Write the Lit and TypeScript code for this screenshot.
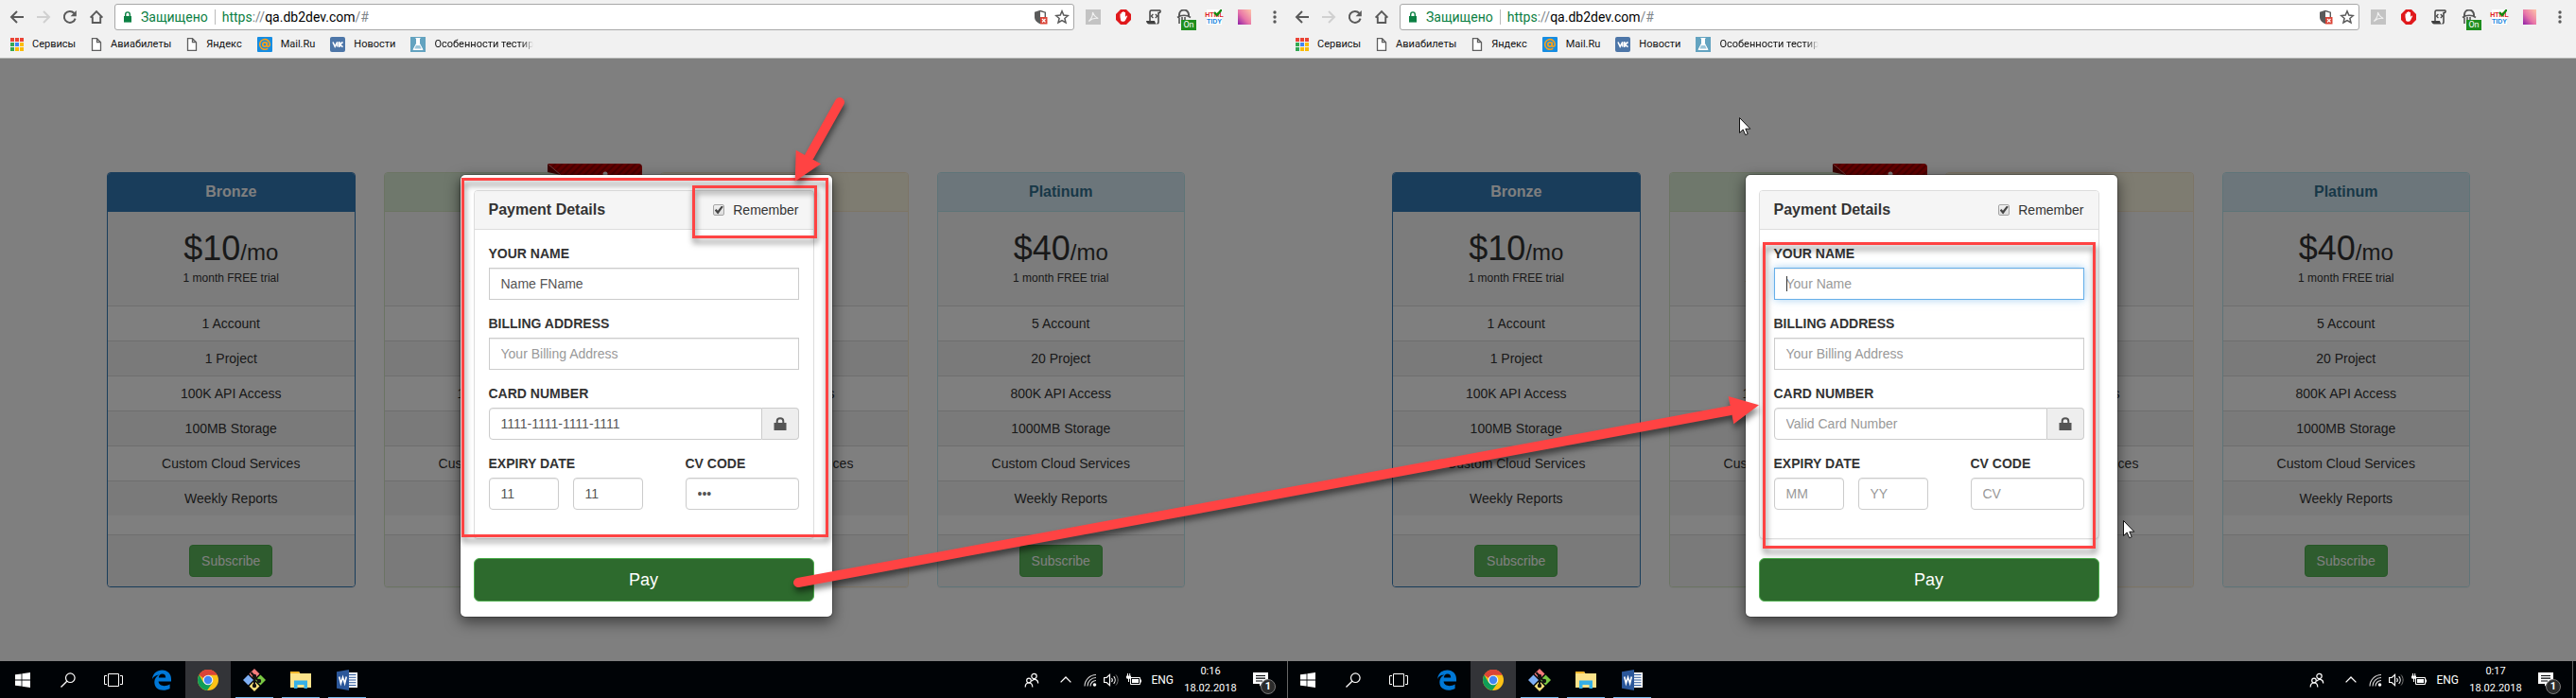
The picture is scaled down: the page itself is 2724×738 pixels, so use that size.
import { LitElement, html, svg, css, nothing } from "lit";
import { customElement, property } from "lit/decorators.js";
import { classMap } from "lit/directives/class-map.js";

const base = css`
  *, *::before, *::after { box-sizing: border-box; }
  button { font: inherit; color: inherit; border: 0; padding: 0; background: none; }
  a { color: inherit; text-decoration: none; }
  svg { display: block; }
`;

const ico = (size: number, body: unknown, box = 16) =>
  html`<svg width=${size} height=${size} viewBox="0 0 ${box} ${box}" aria-hidden="true">${body}</svg>`;

const icons = {
  back: ico(16, svg`<path d="M15 8H2.5M8 2 2 8l6 6" fill="none" stroke="#5a5a5a" stroke-width="2"/>`),
  forward: ico(16, svg`<path d="M1 8h12.5M8 2l6 6-6 6" fill="none" stroke="#d0d0d0" stroke-width="2"/>`),
  reload: ico(16, svg`<path d="M13.6 9.6A6 6 0 1 1 12.4 4" fill="none" stroke="#5a5a5a" stroke-width="2"/><path d="M14.8 1v6.2H8.6z" fill="#5a5a5a"/>`),
  home: ico(16, svg`<path d="M1.6 8.6 8 2l6.4 6.6M3.8 7.4V14h8.4V7.4" fill="none" stroke="#5a5a5a" stroke-width="1.9"/>`),
  lock: ico(12, svg`<path d="M2 5h8v6.6H2z" fill="#0b8043"/><path d="M3.7 5.4V3.2a2.3 2.3 0 0 1 4.6 0v2.2" fill="none" stroke="#0b8043" stroke-width="1.4"/>`, 12),
  shield: ico(16, svg`<path d="M8 .8 2 2.8V8c0 3.400 2.600 6 6 7.200z" fill="#5a5a5a"/><path d="M8 1.500 13.300 3.200V8c0 2.800-2.200 5-5.300 6.300" fill="none" stroke="#5a5a5a" stroke-width="1.400"/><path d="M8 8h7.500v7.500H8z" fill="#db4437"/><path d="m10 10 3.500 3.500m0-3.500L10 13.500" stroke="#fff" stroke-width="1.200"/>`),
  star: ico(16, svg`<path d="m8 1.800 1.800 4.300 4.600.4-3.500 3 1.100 4.500L8 11.600 4 14l1.100-4.500-3.500-3 4.600-.4z" fill="none" stroke="#5a5a5a" stroke-width="1.500"/>`),
  acrobat: ico(16, svg`<path d="M0 0h16v16H0z" fill="#c3c3c3"/><path d="M7.500 3c1.200 3 2 5 5.800 6.500-4-.8-7 .3-10 3C5.500 10.500 7.600 7 7.500 3z" fill="none" stroke="#f1f1f1" stroke-width="1.100"/>`),
  adblock: ico(16, svg`<path d="M5 0h6l5 5v6l-5 5H5l-5-5V5z" fill="#e0191c"/><path d="M4.500 8V4.500h1.300V7V3h1.400v3.500V2.200h1.400v4.300V3H10v5l1.200-1.500 1 .6L10 11.500c-.6 1.500-4 1.800-4.800.2z" fill="#fff"/>`),
  script: ico(16, svg`<path d="M4 12V2.500C4 1.500 4.500 1 5.500 1h9c.8 0 .8 2.500-.5 2.500H13V13c0 1-.5 2-1.500 2" fill="none" stroke="#404040" stroke-width="1.500"/><path d="M0 12h9c.2 1.400.8 2.300 2 3.500H3C1.500 15.500.3 14 0 12z" fill="#404040"/><path d="m7.400 5-2 2 2 2m2.400-4 2 2-2 2" fill="none" stroke="#404040" stroke-width="1.200"/>`),
  incognito: ico(16, svg`<path d="M3 7V5.500a5 5 0 0 1 10 0V7" fill="none" stroke="#555" stroke-width="2"/><path d="M1 8.500c4-3 10-3 14 0M3 8.500V15M6 8v7M9 8v7" fill="none" stroke="#555" stroke-width="1.600"/>`),
  check: ico(16, svg`<path d="m8 3 3 3 5-6" fill="none" stroke="#118a11" stroke-width="2.400"/>`),
  gem: html`<svg width="14" height="16" viewBox="0 0 14 16"><defs><linearGradient id="g" x1="0" y1="1" x2="1" y2="0"><stop offset="0" stop-color="#8e1fa8"/><stop offset=".45" stop-color="#e875a8"/><stop offset="1" stop-color="#ffc6a8"/></linearGradient></defs><rect width="14" height="16" fill="url(#g)"/></svg>`,
  menu: html`<svg width="4" height="14" viewBox="0 0 4 14"><g fill="#5a5a5a"><circle cx="2" cy="2" r="1.700"/><circle cx="2" cy="7" r="1.700"/><circle cx="2" cy="12" r="1.700"/></g></svg>`,
  apps: ico(14, svg`${["#ea4335", "#ea4335", "#ea4335", "#34a853", "#4285f4", "#fbbc05", "#34a853", "#fbbc05", "#fbbc05"].map(
    (c, i) => svg`<rect x=${(i % 3) * 5} y=${Math.floor(i / 3) * 5} width="4" height="4" fill=${c}/>`)}`, 14),
  doc: html`<svg width="12" height="14" viewBox="0 0 12 14"><path d="M1.500.7h5l4 4v8.600h-9zM6.500.7v4h4" fill="#fff" stroke="#5f5f5f" stroke-width="1.300"/></svg>`,
  mail: ico(16, svg`<rect width="16" height="16" rx="1" fill="#168de2"/><circle cx="8" cy="8" r="2.200" fill="none" stroke="#f9a01b" stroke-width="1.700"/><path d="M10.300 5.500V9c0 2 3 1.500 3-1a5.300 5.300 0 1 0-2 4.100" fill="none" stroke="#f9a01b" stroke-width="1.600"/>`),
  vk: ico(16, svg`<rect width="16" height="16" rx="2" fill="#4d76a8"/><path d="m3 5.500 2.200 4.800L7.800 5.500v5M13.500 5.500 10.300 8l3.200 2.700M9.800 5v6" fill="none" stroke="#fff" stroke-width="1.600"/>`),
  flask: ico(16, svg`<rect width="16" height="16" fill="#63a3c0"/><path d="M5.500 1.500h5M6.500 2v5L3 13.500h10L9.500 7V2z" fill="#fff" stroke="#fff"/><path d="M6 9h4l1.700 3.500H4.300z" fill="#9cc6da"/>`),
  win: ico(16, svg`<path d="M0 2.300 6.600 1.400v6.200H0zM7.400 1.300 16 0v7.600H7.400zM0 8.400h6.600v6.200L0 13.700zM7.400 8.400H16V16l-8.600-1.200z" fill="#fff"/>`),
  search: ico(16, svg`<circle cx="10.300" cy="5.700" r="4.800" fill="none" stroke="#fff" stroke-width="1.200"/><path d="M6.800 9.200.5 15.500" stroke="#fff" stroke-width="1.300"/>`),
  tasks: html`<svg width="20" height="14" viewBox="0 0 20 14"><path d="M4.500.5h11v13h-11zM3 2.500H.5v9H3M17 2.500h2.500v9H17" fill="none" stroke="#fff"/></svg>`,
  edge: ico(22, svg`<path d="M1 10C1.600 4 6 .5 11.400.5 17.500.5 21 4.800 21 10v2.600H7.600c.2 3.200 3 4.600 6 4.600 2.200 0 4.200-.6 6-1.600v4.300c-2 1.200-4.500 1.800-7 1.800-5.800 0-9.300-3.500-9.300-8.500 0-3.400 1.900-6.300 5-7.800C4.600 5.800 2.400 7.400 1 10zm6.800-1.500h7.400c0-2.400-1.200-3.900-3.500-3.900-2.200 0-3.600 1.600-3.900 3.900z" fill="#0078d7"/>`, 22),
  chrome: ico(22, svg`<circle cx="11" cy="11" r="11" fill="#fbc116"/><path d="M11 11 1.500 5.500A11 11 0 0 1 20.500 5.500H11z" fill="#db4437"/><path d="M1.500 5.500A11 11 0 0 0 10 21.950L15.800 13.700 11 11 6.200 13.800z" fill="#0f9d58"/><path d="M1.500 5.500A11 11 0 0 1 20.500 5.500H11a5.500 5.500 0 0 0-5 3.500z" fill="#db4437"/><circle cx="11" cy="11" r="5.300" fill="#f1f1f1"/><circle cx="11" cy="11" r="4.200" fill="#4285f4"/>`, 22),
  git: ico(24, svg`<path d="m12 0 5.500 5.500L12 11 6.500 5.500z" fill="#f47c7c"/><path d="m18.500 6.500 5.500 5.500-5.500 5.500L13 12z" fill="#7ac943"/><path d="m5.500 6.500L11 12l-5.500 5.500L0 12z" fill="#7fb0f5"/><path d="m12 13 5.500 5.500L12 24l-5.500-5.500z" fill="#f7e07a"/><path d="M8.500 4 12 8v11M12 9l5 4" stroke="#111" stroke-width="2" fill="none"/><circle cx="12" cy="8" r="2.200" fill="#111"/><circle cx="17" cy="13" r="2.200" fill="#111"/><circle cx="12" cy="18" r="2.200" fill="#111"/>`, 24),
  folder: html`<svg width="22" height="20" viewBox="0 0 22 20"><path d="M0 1h9l1.500 2H22v15H0z" fill="#fce38a"/><path d="M0 1h9l1 2H0z" fill="#f0b429"/><path d="M4 10.500h14V19h-3.500v-4h-7v4H4z" fill="#35b0e6"/></svg>`,
  word: html`<svg width="22" height="22" viewBox="0 0 22 22"><path d="M12 3h10v16H12z" fill="#fff"/><path d="M13 5.500h7.500M13 8.200h7.500M13 11h7.500M13 13.800h7.500M13 16.500h7.500" stroke="#2b579a" stroke-width="1.100"/><path d="M0 2.200 13 0v22L0 19.800z" fill="#2b579a"/><path d="m2.700 7.500 1.700 7L6.500 8l2.100 6.500 1.700-7" fill="none" stroke="#fff" stroke-width="1.600"/></svg>`,
  people: ico(16, svg`<g fill="none" stroke="#fff" stroke-width="1.200"><circle cx="10.500" cy="4" r="2.700"/><circle cx="5" cy="8.500" r="2.300"/><path d="M1.200 15.500c0-6 7.600-6 7.600 0M8 9c3-3 6.700-1.500 6.700 2.500"/></g>`),
  up: html`<svg width="12" height="7" viewBox="0 0 12 7"><path d="M.6 6.400 6 1l5.400 5.400" fill="none" stroke="#fff" stroke-width="1.300"/></svg>`,
  wifi: html`<svg width="14" height="14" viewBox="0 0 14 14"><g fill="none" stroke="#d8d8d8" stroke-width="1.100"><path d="M1 13.500A12 12 0 0 1 13 1.500"/><path d="M4 13.500a9 9 0 0 1 9-9"/><path d="M7 13.500a6 6 0 0 1 6-6"/></g><circle cx="11.500" cy="12" r="1.800" fill="#fff"/></svg>`,
  volume: ico(16, svg`<path d="M.6 5.500h2.600L6.500 2.300v11.400L3.200 10.500H.6z" fill="none" stroke="#fff" stroke-width="1.200"/><path d="M8.500 6c1 1.200 1 2.800 0 4M10.700 4.200c2 2.200 2 5.400 0 7.600" fill="none" stroke="#fff" stroke-width="1.100"/><path d="M13 2.500c2.800 3 2.800 8 0 11" fill="none" stroke="#777"/>`),
  battery: html`<svg width="16" height="13" viewBox="0 0 16 13"><path d="M4.500 4.500h10v7h-10z" fill="none" stroke="#fff"/><path d="M6 6h7v4H6zM15 6.500h1v3h-1z" fill="#fff"/><path d="M0 2.500h5v2.200c0 1.300-5 1.300-5 0zM1 0h1v3H1zM3.200 0h1v3h-1zM2 5h1v4H2z" fill="#fff"/></svg>`,
  note: html`<svg width="16" height="15" viewBox="0 0 16 15"><path d="M0 0h16v12H9.500L7 14.800V12H0z" fill="#fff"/><path d="M3 3.500h10M3 6.200h10M3 9h7" stroke="#000306" stroke-width="1.200"/></svg>`,
  padlock: html`<svg width="14" height="14" viewBox="0 0 14 14"><path d="M.5 6h13v8H.5z" fill="#555"/><path d="M3.700 6.500V4.200c0-4 6.600-4 6.600 0v2.300" fill="none" stroke="#555" stroke-width="2"/></svg>`,
};

@customElement("browser-bar")
export class BrowserBar extends LitElement {
  static styles = [base, css`
    :host { display: block; background: #f1f1f1; border-bottom: 1px solid #b4b6b4;
      font-family: Roboto, "Noto Sans", sans-serif; }
    .nav { display: flex; align-items: center; padding: 4px 16px 0 4px; }
    .tool { width: 28px; height: 28px; display: grid; place-items: center; }
    .address { flex: 1; height: 28px; margin: 0 4px 0 5px; padding: 0 4px 0 7px; border: 1px solid #a8a8a8; border-radius: 3px;
      background: #fff; display: flex; align-items: center; font-size: 14px; color: #0b8043; white-space: nowrap; }
    .secure { margin-left: 8px; padding-right: 7px; }
    .url { border-left: 1px solid #bbb; padding-left: 7px; flex: 1; line-height: 16px; }
    .url b { font-weight: 400; color: #000; }
    .url i { font-style: normal; color: #80868b; }
    .mark { margin-left: 7px; }
    .ext { position: relative; width: 32px; height: 28px; display: grid; place-items: center; }
    .on { position: absolute; left: 13px; top: 17px; width: 16px; height: 11px; background: #1e8e1e; color: #fff;
      font-size: 9px; line-height: 11px; text-align: center; }
    .tidy { font: 700 7px/7px "Liberation Sans", sans-serif; width: 16px; height: 16px; background: #fff; color: #e02020;
      padding-top: 2px; display: grid; justify-content: center; white-space: nowrap; }
    .tidy span { color: #1c87e0; }
    .tick { position: absolute; left: 8px; top: 6px; }
    .dots { width: 4px; margin-left: 14px; }
    .marks { display: flex; align-items: center; height: 29px; padding-left: 11px; font-size: 11px; color: #111; }
    .marks a { display: flex; align-items: center; gap: 9px; margin-right: 16px; white-space: nowrap; }
    .fade { -webkit-mask-image: linear-gradient(90deg, #000 88%, transparent); mask-image: linear-gradient(90deg, #000 88%, transparent); }
  `];

  render() {
    const nav: [string, unknown][] = [["Назад", icons.back], ["Вперёд", icons.forward], ["Обновить", icons.reload], ["Домой", icons.home]];
    const links: [unknown, string][] = [[icons.apps, "Сервисы"], [icons.doc, "Авиабилеты"], [icons.doc, "Яндекс"],
      [icons.mail, "Mail.Ru"], [icons.vk, "Новости"], [icons.flask, "Особенности тестир"]];
    return html`
      <div class="nav">
        ${nav.map(([name, icon]) => html`<button class="tool" aria-label=${name}>${icon}</button>`)}
        <div class="address">
          ${icons.lock}<span class="secure">Защищено</span>
          <span class="url">https<i>://</i><b>qa.db2dev.com</b><i>/#</i></span>
          <button class="mark" aria-label="Защита">${icons.shield}</button>
          <button class="mark" aria-label="Закладка">${icons.star}</button>
        </div>
        <button class="ext" aria-label="Acrobat">${icons.acrobat}</button>
        <button class="ext" aria-label="AdBlock">${icons.adblock}</button>
        <button class="ext" aria-label="Script">${icons.script}</button>
        <button class="ext" aria-label="VPN">${icons.incognito}<span class="on">On</span></button>
        <button class="ext" aria-label="Tidy"><span class="tidy">HTML<span>TIDY</span></span><span class="tick">${icons.check}</span></button>
        <button class="ext" aria-label="Gradient">${icons.gem}</button>
        <button class="dots" aria-label="Меню">${icons.menu}</button>
      </div>
      <nav class="marks">
        ${links.map(([icon, text], i) => html`<a href="#">${icon}<span class=${i === 5 ? "fade" : ""}>${text}</span></a>`)}
      </nav>`;
  }
}

interface Plan { name: string; tone: string; price: string; rows: string[]; ribbon?: boolean }

const plan = (name: string, tone: string, price: string, account: string, project: string, api: string, storage: string, ribbon = false): Plan =>
  ({ name, tone, price, ribbon, rows: [`${account} Account`, `${project} Project`, `${api} API Access`, `${storage} Storage`, "Custom Cloud Services", "Weekly Reports"] });

const plans: Plan[] = [
  plan("Bronze", "primary", "$10", "1", "1", "100K", "100MB"),
  plan("Silver", "success", "$20", "2", "5", "100K", "200MB", true),
  plan("Gold", "warning", "$30", "3", "10", "500K", "500MB"),
  plan("Platinum", "info", "$40", "5", "20", "800K", "1000MB"),
];

@customElement("plan-card")
export class PlanCard extends LitElement {
  @property({ attribute: false }) plan!: Plan;

  static styles = [base, css`
    :host { display: block; }
    .card { position: relative; border: 1px solid var(--edge); border-radius: 4px; background: #fff; text-align: center;
      font-size: 14px; line-height: 20px; color: #333; box-shadow: 0 1px 1px rgba(0, 0, 0, .05); }
    .primary { --edge: #337ab7; --head: #337ab7; --ink: #fff; }
    .success { --edge: #d6e9c6; --head: #dff0d8; --ink: #3c763d; }
    .warning { --edge: #faebcc; --head: #fcf8e3; --ink: #8a6d3b; }
    .info { --edge: #bce8f1; --head: #d9edf7; --ink: #31708f; }
    h3 { margin: 0; padding: 10px 15px; border-bottom: 1px solid var(--edge); border-radius: 3px 3px 0 0;
      background: var(--head); color: var(--ink); font-size: 16px; line-height: 20px; font-weight: 700; }
    .price { background: #f8f8f8; padding: 19px 0; }
    .sum { font-size: 36px; line-height: 40px; }
    .sum span { font-size: 24px; line-height: 24px; }
    .trial { font-size: 12px; margin-top: 1px; }
    table { width: 100%; border-spacing: 0; margin-bottom: 20px; }
    td { padding: 8px; border-top: 1px solid #ddd; }
    tr:nth-child(even) { background: #f5f5f5; }
    .foot { padding: 10px 15px; border-top: 1px solid #ddd; background: #f5f5f5; border-radius: 0 0 3px 3px; }
    .foot button { display: block; margin: 0 auto; height: 34px; padding: 0 12px; border: 1px solid #4cae4c; border-radius: 4px; background: #5cb85c; color: #fff; }
    .ribbon { position: absolute; right: -12px; top: -10px; width: 100px; height: 100px; }
  `];

  render() {
    const p = this.plan;
    return html`<section class="card ${p.tone}">
      ${p.ribbon ? html`<svg class="ribbon" viewBox="0 0 100 100" aria-hidden="true">
        <defs><pattern id="s" width="5" height="5" patternUnits="userSpaceOnUse" patternTransform="rotate(45)">
          <rect width="5" height="5" fill="#c40000"/><rect width="2" height="5" fill="#960000"/></pattern></defs>
        <path d="M0 0h96a4 4 0 0 1 4 4v96L82 82 14 12z" fill="url(#s)"/><path d="M0 0 14 12 0 9z" fill="#700"/>
        <path d="M0 0 14 12" stroke="#e88" stroke-width=".7"/><circle cx="61" cy="11" r="2.500" fill="#fff"/></svg>` : nothing}
      <h3>${p.name}</h3>
      <div class="price"><div class="sum">${p.price}<span>/mo</span></div><div class="trial">1 month FREE trial</div></div>
      <table><tbody>${p.rows.map((r) => html`<tr><td>${r}</td></tr>`)}</tbody></table>
      <div class="foot"><button>Subscribe</button></div>
    </section>`;
  }
}

@customElement("payment-dialog")
export class PaymentDialog extends LitElement {
  @property({ type: Boolean }) filled = false;

  static styles = [base, css`
    :host { display: block; box-sizing: border-box; width: 395px; padding: 16px 19px 16px 14px; border: 1px solid rgba(0, 0, 0, .2); border-radius: 6px;
      background: #fff; background-clip: padding-box; box-shadow: 0 5px 15px rgba(0, 0, 0, .5); color: #333; font-size: 14px; line-height: 20px; }
    form { margin: 0; }
    .panel { border: 1px solid #ddd; border-radius: 4px; margin-bottom: 20px; box-shadow: 0 1px 1px rgba(0, 0, 0, .05); }
    .head { display: flex; justify-content: space-between; align-items: center; padding: 10px 15px; background: #f5f5f5;
      border-bottom: 1px solid #ddd; border-radius: 3px 3px 0 0; }
    h3 { margin: 0; font-size: 16px; line-height: 20px; }
    .remember { display: flex; align-items: center; gap: 9px; }
    .remember input { appearance: none; width: 12px; height: 12px; margin: 0; border: 1px solid #a5a5a5; border-radius: 2px;
      background: linear-gradient(#f0f0f0, #dcdcdc); display: grid; place-items: center; }
    .remember input:checked::after { content: ""; width: 9px; height: 9px; background: #444;
      clip-path: polygon(0 55%, 18% 38%, 36% 58%, 82% 0, 100% 14%, 38% 100%); }
    .body { display: grid; gap: 15px; padding: 15px 15px 30px; }
    .field { display: grid; gap: 5px; position: relative; }
    .field label { font-weight: 700; text-transform: uppercase; }
    .box { width: 100%; min-width: 0; height: 34px; padding: 6px 12px; border: 1px solid #ccc; border-radius: 4px; background: #fff; color: #555;
      font: 14px/20px "Liberation Sans", sans-serif; box-shadow: inset 0 1px 1px rgba(0, 0, 0, .075); outline: 0; }
    .box::placeholder { color: #999; opacity: 1; }
    .square { border-radius: 0; }
    .active { border-color: #66afe9; box-shadow: inset 0 1px 1px rgba(0, 0, 0, .075), 0 0 8px rgba(102, 175, 233, .6); }
    .caret { position: absolute; left: 13px; bottom: 9px; width: 1px; height: 16px; background: #333; }
    .group { display: flex; }
    .group .box { border-radius: 4px 0 0 4px; }
    .addon { flex: none; width: 39px; display: grid; place-items: center; background: #eee; border: 1px solid #ccc; border-left: 0; border-radius: 0 4px 4px 0; }
    .split { display: grid; grid-template-columns: 163px 120px; justify-content: space-between; }
    .pair { display: grid; grid-template-columns: 1fr 1fr; gap: 15px; }
    .pay { display: block; width: 100%; height: 46px; border: 1px solid #4cae4c; border-radius: 6px; background: #2d6a2d; color: #fff; font-size: 18px; }
  `];

  render() {
    const v = (s: string) => (this.filled ? s : "");
    return html`<form @submit=${(e: Event) => e.preventDefault()}>
      <div class="panel">
        <div class="head"><h3>Payment Details</h3><label class="remember"><input type="checkbox" checked />Remember</label></div>
        <div class="body">
          <div class="field"><label for="name">Your name</label>
            <input id="name" class=${classMap({ box: true, square: true, active: !this.filled })} placeholder="Your Name" .value=${v("Name FName")} />
            ${this.filled ? nothing : html`<span class="caret"></span>`}</div>
          <div class="field"><label for="address">Billing address</label>
            <input id="address" class="box square" placeholder="Your Billing Address" /></div>
          <div class="field"><label for="card">Card number</label>
            <div class="group"><input id="card" class="box" placeholder="Valid Card Number" .value=${v("1111-1111-1111-1111")} />
              <span class="addon">${icons.padlock}</span></div></div>
          <div class="split">
            <div class="field"><label for="month">Expiry date</label>
              <div class="pair"><input id="month" class="box" placeholder="MM" .value=${v("11")} />
                <input class="box" aria-label="Expiry year" placeholder="YY" .value=${v("11")} /></div></div>
            <div class="field"><label for="cv">CV code</label>
              <input id="cv" class="box" type="password" placeholder="CV" .value=${v("111")} /></div>
          </div>
        </div>
      </div>
      <button class="pay">Pay</button>
    </form>`;
  }
}

@customElement("task-bar")
export class TaskBar extends LitElement {
  @property() time = "";

  static styles = [base, css`
    :host { display: flex; align-items: stretch; height: 39px; background: #000306; color: #fff; font: 12px/18px Roboto, "Noto Sans", sans-serif; }
    .cell { width: 48px; display: grid; place-items: center; position: relative; }
    .apps { display: flex; gap: 1px; margin-left: 3px; }
    .current { background: #333438; }
    .running::after { content: ""; position: absolute; left: 4px; right: 4px; bottom: 0; height: 1px; background: #76b9ed; }
    .tray { margin-left: auto; display: flex; align-items: center; }
    .people { margin-right: 22px; }
    .up { margin-right: 13px; }
    .wifi { margin-right: 7px; }
    .volume { margin-right: 8px; }
    .lang { margin: 0 11px 0 10px; }
    .clock { text-align: center; font-size: 11px; width: 56px; white-space: nowrap; }
    .note { position: relative; margin: 0 20px 0 17px; }
    .badge { position: absolute; left: 8px; top: 7px; width: 16px; height: 16px; border: 1px solid #777; border-radius: 50%; background: #2b2b2b;
      font-size: 11px; line-height: 14px; font-weight: 700; text-align: center; }
    .edge { align-self: stretch; width: 5px; border-left: 1px solid #666; }
  `];

  render() {
    const apps: [string, unknown, string][] = [["Edge", icons.edge, ""], ["Chrome", icons.chrome, "current"], ["Git", icons.git, "running"],
      ["Explorer", icons.folder, "running"], ["Word", icons.word, "running"]];
    return html`
      <button class="cell" aria-label="Start">${icons.win}</button>
      <button class="cell" aria-label="Search">${icons.search}</button>
      <button class="cell" aria-label="Task view">${icons.tasks}</button>
      <div class="apps">${apps.map(([n, i, c]) => html`<button class="cell ${c}" aria-label=${n}>${i}</button>`)}</div>
      <div class="tray">
        <button class="people" aria-label="People">${icons.people}</button>
        <button class="up" aria-label="Hidden icons">${icons.up}</button>
        <span class="wifi">${icons.wifi}</span><span class="volume">${icons.volume}</span>${icons.battery}
        <span class="lang">ENG</span>
        <div class="clock"><div>${this.time}</div><div>18.02.2018</div></div>
        <button class="note" aria-label="Notifications">${icons.note}<span class="badge">1</span></button>
        <span class="edge"></span>
      </div>`;
  }
}

@customElement("desktop-screen")
export class DesktopScreen extends LitElement {
  @property() time = "";
  @property({ type: Boolean }) filled = false;

  static styles = [base, css`
    :host { display: flex; flex-direction: column; min-height: 100vh; font-family: "Liberation Sans", Arial, sans-serif; }
    .page { flex: 1; position: relative; background: #fff; padding: 120px 20px 78px; }
    .plans { display: grid; grid-template-columns: repeat(4, 1fr); gap: 30px; max-width: 1140px; margin: 0 auto; }
    .shade { position: absolute; inset: 0; background: rgba(0, 0, 0, .5); display: flex; justify-content: center; align-items: flex-start; padding-top: 122px; }
  `];

  render() {
    return html`
      <browser-bar></browser-bar>
      <main class="page">
        <div class="plans">${plans.map((p) => html`<plan-card .plan=${p}></plan-card>`)}</div>
        <div class="shade"><payment-dialog role="dialog" ?filled=${this.filled}></payment-dialog></div>
      </main>
      <task-bar time=${this.time}></task-bar>`;
  }
}

@customElement("app-root")
export class AppRoot extends LitElement {
  static styles = [base, css`
    :host { display: block; position: relative; overflow: hidden; }
    .pair { display: grid; grid-template-columns: 1fr 1fr; }
    .pane { overflow: hidden; min-width: 0; }
    .pane desktop-screen { width: calc(100% + 4px); }
    .second desktop-screen { margin-left: -3px; }
    .marks { position: absolute; left: 0; top: 0; pointer-events: none; }
    .red { filter: drop-shadow(1px 5px 3px rgba(0, 0, 0, .5)); }
  `];

  render() {
    const pointer = (x: number, y: number) => svg`<path transform="translate(${x} ${y})" d="M.5.5v16l3.700-3.500 2.500 5.700 2.500-1.100-2.400-5.400h5z" fill="#fff" stroke="#111"/>`;
    return html`
      <div class="pair">
        <div class="pane"><desktop-screen time="0:16" filled></desktop-screen></div>
        <div class="pane second"><desktop-screen time="0:17"></desktop-screen></div>
      </div>
      <svg class="marks" width="2724" height="738" viewBox="0 0 2724 738" aria-hidden="true">
        <g class="red" fill="none" stroke="#ff4343" stroke-width="3">
          <rect x="489.500" y="189.500" width="385" height="377"/>
          <rect x="733.500" y="197.500" width="129" height="53"/>
          <rect x="1865.500" y="257.500" width="349" height="321"/>
        </g>
        <g class="red" fill="#ff4343" stroke="#ff4343">
          <path d="M888 108 856 165M844 616l986-182" stroke-width="10" stroke-linecap="round"/>
          <path d="m840.700 191.700 1-33 26.300 14.600zM1860 428.300l-32.300-9.300 5.600 29.300z" stroke="none"/>
        </g>
        ${pointer(1839, 124)}${pointer(2245, 550)}
      </svg>`;
  }
}
